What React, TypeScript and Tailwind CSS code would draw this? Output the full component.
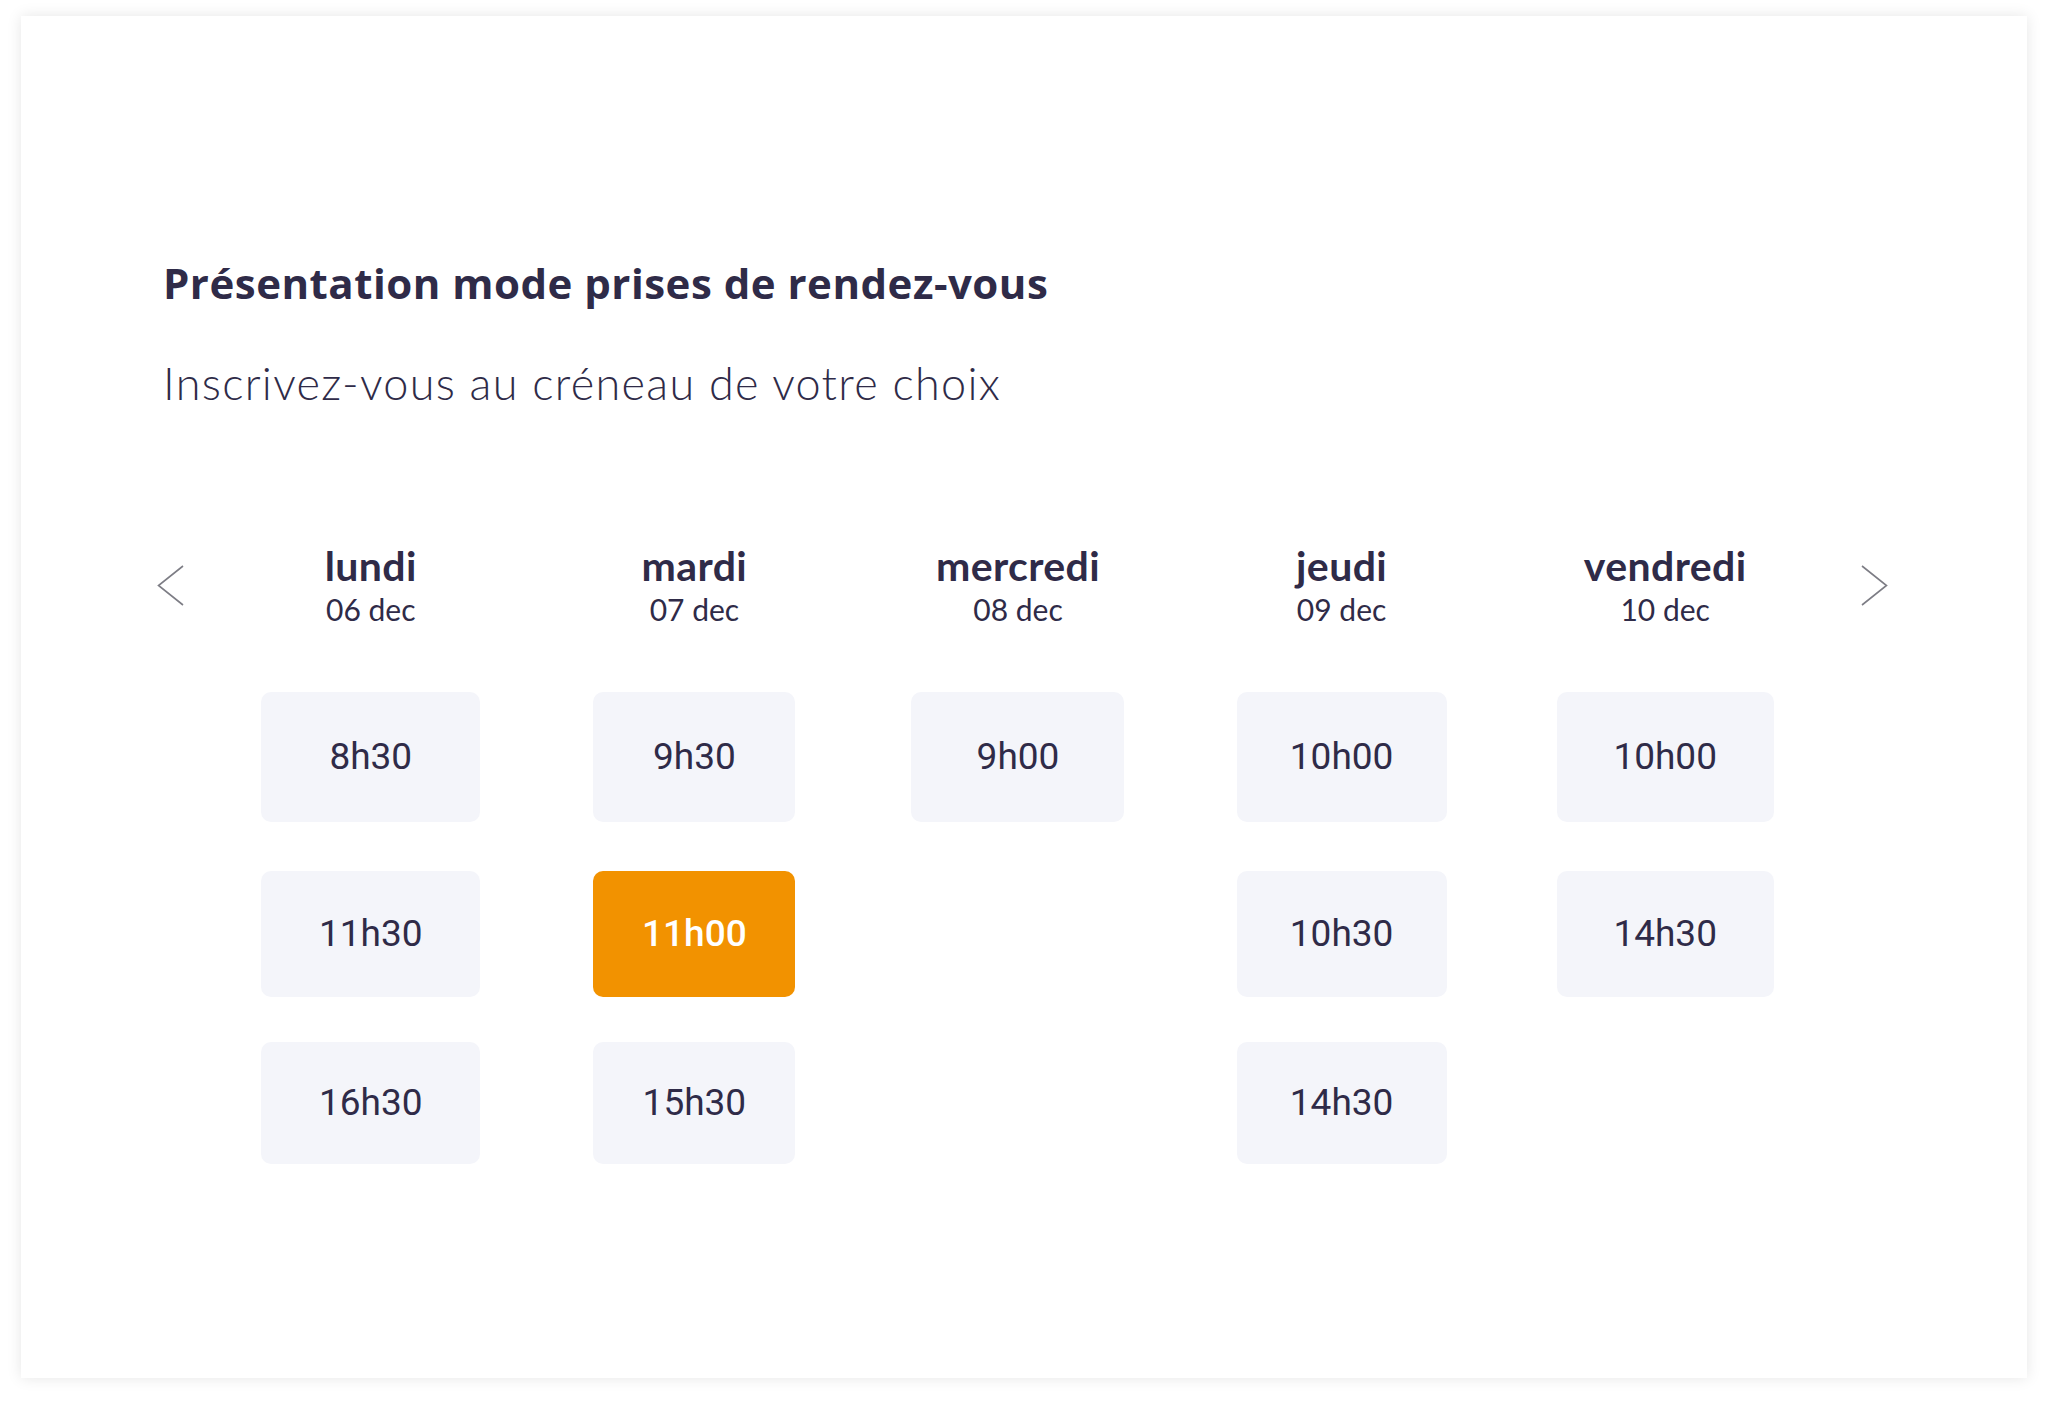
import React from "react";

type Day = { name: string; date: string; width: string; slots: string[] };

const days: Day[] = [
  { name: "lundi", date: "06 dec", width: "w-[219px]", slots: ["8h30", "11h30", "16h30"] },
  { name: "mardi", date: "07 dec", width: "w-[202px]", slots: ["9h30", "11h00", "15h30"] },
  { name: "mercredi", date: "08 dec", width: "w-[213px]", slots: ["9h00"] },
  { name: "jeudi", date: "09 dec", width: "w-[210px]", slots: ["10h00", "10h30", "14h30"] },
  { name: "vendredi", date: "10 dec", width: "w-[217px]", slots: ["10h00", "14h30"] },
];

const selected = "mardi-11h00";

// hauteur des créneaux par ligne (la maquette n'est pas tout à fait régulière)
const rowClass = ["h-[130px]", "h-[126px] mt-[49px]", "h-[122px] mt-[45px]"];

function Chevron({ dir }: { dir: "left" | "right" }) {
  return (
    <svg width="27" height="43" viewBox="0 0 27 43" fill="none">
      <path
        d={dir === "left" ? "M26 2 L1.5 21.5 L26 41" : "M1 2 L25.5 21.5 L1 41"}
        stroke="#7d7d85"
        strokeWidth="1.6"
      />
    </svg>
  );
}

export default function App() {
  return (
    <div className="min-h-screen bg-white pl-[21px] pt-[16px]">
      <div className="w-[2006px] h-[1362px] bg-white shadow-[0_0_14px_rgba(0,0,0,0.10)] pt-[243px] pl-[136px] text-[#2f2b48]">
        <h1 className="pl-[6px] font-['Open_Sans',sans-serif] font-bold text-[42px] leading-[48px] tracking-[0.5px]">
          Présentation mode prises de rendez-vous
        </h1>
        <p className="pl-[6px] mt-[49px] font-['Lato',sans-serif] font-light text-[45px] leading-[54px] tracking-[1.3px]">
          Inscrivez-vous au créneau de votre choix
        </p>

        <div className="mt-[134px] flex items-center">
          <div className="w-[52px] flex items-center">
            <Chevron dir="left" />
          </div>
          <div className="w-[1618px] grid grid-cols-5">
            {days.map((d) => (
              <div key={d.name} className="flex flex-col items-center font-['Lato',sans-serif]">
                <span className="font-bold text-[41px] leading-[44px] tracking-[0.4px]">{d.name}</span>
                <span className="mt-[3px] text-[30px] leading-[36px]">{d.date}</span>
              </div>
            ))}
          </div>
          <div className="pl-[34px] flex items-center">
            <Chevron dir="right" />
          </div>
        </div>

        <div className="mt-[65px] ml-[52px] w-[1618px] grid grid-cols-5 items-start">
          {days.map((d) => (
            <div key={d.name} className="flex flex-col items-center">
              {d.slots.map((s, i) => {
                const on = `${d.name}-${s}` === selected;
                return (
                  <button
                    key={s}
                    className={
                      on
                        ? `${d.width} ${rowClass[i]} rounded-[10px] bg-[#f29200] text-white font-medium font-['Roboto',sans-serif] text-[37px]`
                        : `${d.width} ${rowClass[i]} rounded-[10px] bg-[#f4f5fa] text-[#2f2b48] font-['Roboto',sans-serif] text-[37px]`
                    }
                  >
                    {s}
                  </button>
                );
              })}
            </div>
          ))}
        </div>
      </div>
    </div>
  );
}
